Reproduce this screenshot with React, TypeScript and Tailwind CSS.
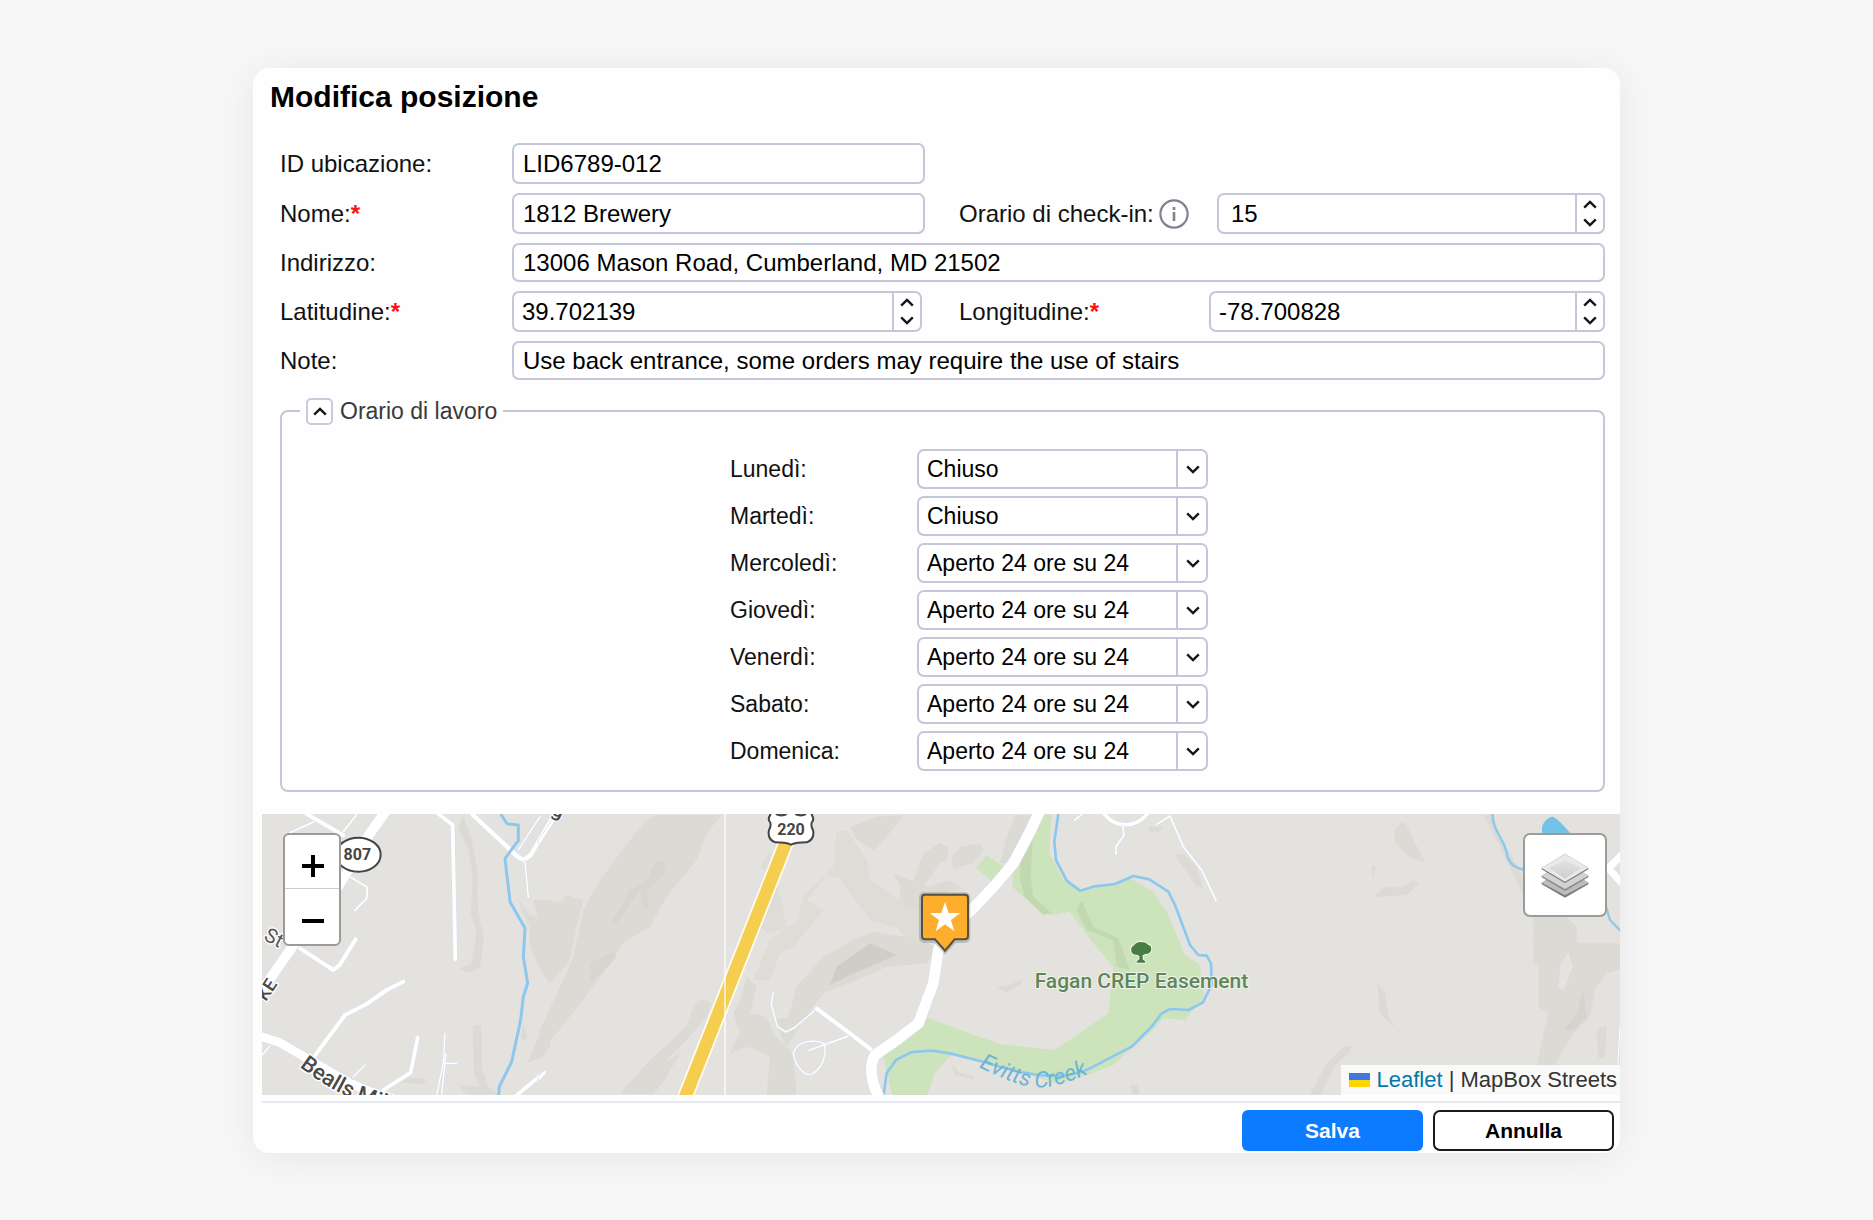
import { useState } from "react";
import type { ReactNode } from "react";

const DAYS = [
  { id: "lun", label: "Lunedì:", value: "closed" },
  { id: "mar", label: "Martedì:", value: "closed" },
  { id: "mer", label: "Mercoledì:", value: "open" },
  { id: "gio", label: "Giovedì:", value: "open" },
  { id: "ven", label: "Venerdì:", value: "open" },
  { id: "sab", label: "Sabato:", value: "open" },
  { id: "dom", label: "Domenica:", value: "open" },
];

const FIELD =
  "w-full min-w-0 rounded-[7px] border-2 border-[#c5c6da] bg-white px-[9px] text-2xl leading-7 text-black outline-none focus:border-[#0a78ff]";

function Chevron({ up = false }: { up?: boolean }) {
  return (
    <svg width="14" height="9" viewBox="0 0 14 9" fill="none" stroke="#15151c" strokeWidth="2.4" aria-hidden="true">
      <path d={up ? "M1.2 7.6 7 1.9l5.8 5.7" : "M1.2 1.4 7 7.1l5.8-5.7"} />
    </svg>
  );
}

function Label({ htmlFor, required, children }: { htmlFor: string; required?: boolean; children: ReactNode }) {
  return (
    <label htmlFor={htmlFor} className="block text-2xl leading-7 whitespace-nowrap text-[#111]">
      {children}
      {required && <span className="font-bold text-[#ff1010]">*</span>}
    </label>
  );
}

function NumberField({ id, initial, step, inset = "pl-2" }: { id: string; initial: string; step: number; inset?: string }) {
  const [value, setValue] = useState(initial);
  const digits = (initial.split(".")[1] ?? "").length;
  const bump = (d: number) => setValue((Number(value) + d * step).toFixed(digits));
  return (
    <div className="flex h-[41px] w-full overflow-hidden rounded-[7px] border-2 border-[#c5c6da] bg-white">
      <input
        id={id}
        type="text"
        inputMode="decimal"
        value={value}
        onChange={(e) => setValue(e.target.value)}
        className={`min-w-0 flex-1 text-2xl leading-7 text-black outline-none ${inset}`}
      />
      <div className="flex w-7 flex-col border-l-2 border-[#c5c6da]">
        <button type="button" aria-label="Aumenta" onClick={() => bump(1)} className="flex flex-1 items-center justify-center">
          <Chevron up />
        </button>
        <button type="button" aria-label="Diminuisci" onClick={() => bump(-1)} className="flex flex-1 items-center justify-center">
          <Chevron />
        </button>
      </div>
    </div>
  );
}

function InfoIcon() {
  return (
    <svg width="30" height="30" viewBox="0 0 30 30" fill="none" aria-hidden="true">
      <circle cx="15" cy="15" r="13.6" stroke="#7f838d" strokeWidth="2.2" />
      <path d="M15 13v9" stroke="#7f838d" strokeWidth="2.6" />
      <path d="M15 8v3" stroke="#7f838d" strokeWidth="2.6" />
    </svg>
  );
}

function LayersIcon() {
  return (
    <svg width="48" height="46" viewBox="0 0 144 138" aria-hidden="true">
      <defs>
        <linearGradient id="sheet" x1="0" y1="0" x2="0" y2="1">
          <stop offset="0" stopColor="#e2e2e2" />
          <stop offset="1" stopColor="#cfcfcf" />
        </linearGradient>
      </defs>
      <path d="M2 92 72 50l70 42v5l-70 40L2 97z" fill="#7d7d7d" />
      <path d="M2 92 72 50l70 42-70 38z" fill="#bcbcbc" />
      <path d="M2 71 72 29l70 42v5l-70 41L2 76z" fill="#8b8b8b" />
      <path d="M2 71 72 29l70 42-70 40z" fill="#d2d2d2" />
      <path d="M2 48 72 5l70 43v4L72 93 2 52z" fill="#757575" />
      <path d="M2 48 72 5l70 43-70 41z" fill="#e9e9e9" />
      <path d="M24 48 72 25l48 23-48 32z" fill="url(#sheet)" />
    </svg>
  );
}

function Road({ d, w }: { d: string; w: number }) {
  return (
    <>
      <path d={d} stroke="#dcdfec" strokeWidth={w + 4} fill="none" strokeLinecap="round" strokeLinejoin="round" />
      <path d={d} stroke="#fff" strokeWidth={w} fill="none" strokeLinecap="round" strokeLinejoin="round" />
    </>
  );
}

function Hills() {
  return (
    <>
      <g transform="translate(-36 -42)" fill="#dcdad5">
        <path d="M640 45 625 80 655 150 668 230 662 340 680 400 664 490 625 508 660 518 690 500 702 410 684 340 682 210 665 120z" />
        <path d="M805 300 840 345 862 350 850 300 900 298V550L875 520 840 440 838 380z" />
        <path d="M668 676H694V800L715 860 745 884H700L672 820z" />
        <path d="M625 855 690 860 700 884H650zM450 848 480 832 530 838 520 852z" />
        <path d="M900 620 870 700 832 790 880 770 900 740zM820 670l12 40-8 15-12-10z" />
      </g>
      <g transform="translate(834 -42)" fill="#dcdad5">
        <path d="M0 300 60 305 80 285 130 300 110 380 85 490 30 550 0 500z" />
        <path d="M545 45 500 100 470 180 380 290 330 380 250 430 160 560 50 700 0 760V690L60 560 100 470 130 330 180 240 270 120 320 60 350 45z" />
        <path d="M240 880 330 780 440 680 460 620 490 595 515 610 500 650 440 720 370 790 420 760 380 830 340 884z" />
        <path d="M690 150 640 240 660 200 690 230 650 380 690 400 770 370 790 290 880 200 890 95 920 90 980 180 990 240 1080 300 1145 310V420L1200 450 1150 480 1100 420 1075 385 990 360 900 235 860 225 800 300 850 330 760 440 720 460 690 540 640 540 690 420 740 380z" opacity=".85" />
        <path d="M770 560 850 470 940 420 1000 395 1120 415 1190 440 1160 490 1040 500 930 550 850 580 790 660 740 740 700 660 745 650z" />
        <path d="M620 530 650 560 630 640 680 650 700 700 760 760 770 884H680L690 770 620 740 570 760 600 700 580 640 600 600z" />
        <path d="M870 555 890 500 990 430 1070 465 1000 495 930 525z" fill="#d0cdc7" />
        <path d="M930 80 1010 50 1090 45 1040 110 1000 150 950 120z" />
        <path d="M1060 220 1120 245 1150 160 1200 130V190L1150 260 1090 270z" />
        <path d="M270 270 320 240 350 180 380 190 370 230 320 270 325 325 310 325 300 270 230 370 212 370zM150 490 220 455 230 470 200 505 150 545z" fill="#d7d5d0" />
      </g>
      <g transform="translate(1914 -42)" fill="#dcdad5">
        <path d="M40 250 60 180 120 128 145 140 140 180 90 200 70 255zM155 170 180 140 240 130 250 150 220 190 160 205z" />
        <path d="M345 45H400L375 120 345 190 300 190 320 110zM0 420 70 430 90 470 40 495 0 490zM0 235 80 260 150 240 190 265 90 290 60 330 0 310z" />
        <path d="M290 560 330 555 370 535 360 555 320 578zM825 165 850 162 890 200 908 265 890 260zM745 80 790 82 780 95 750 95zM690 855 715 855 720 884H700zM150 785 180 820 225 828 220 838 165 825z" />
      </g>
      <g transform="translate(3084 -42)" fill="#dcdad5">
        <path d="M335 66 350 75 370 120 408 188 365 175 315 130 312 95zM245 195 257 200 248 240zM256 285 285 262 330 262 370 242 388 248 350 285 260 292zM263 550 285 580 295 650 318 685 268 640z" />
        <path d="M580 45 620 120 650 180 700 290 730 360V490L745 500 745 620 775 640 760 700 740 800H790L850 700 900 650 915 570 950 520 990 510V430L940 430H860V380L830 350 800 340 720 350 700 230 660 160 620 90 610 45z" />
        <path d="M60 884 110 790 160 740 185 738 180 755 130 800 95 884zM920 690 950 675 945 770 925 775z" />
        <path d="M835 455 848 500 820 575 805 560 812 490z" fill="#e5e3e0" />
        <path d="M880 570 860 640 820 690 850 690 890 650z" fill="#d5d3ce" />
      </g>
    </>
  );
}

function MapDrawing() {
  const label = "'Roboto', 'Liberation Sans', sans-serif";
  return (
    <svg className="block h-full w-full" viewBox="0 0 4074 843" preserveAspectRatio="xMidYMid slice" role="img" aria-label="Mappa della posizione">
      <defs>
        <path id="creek-label" d="M236 802C310 836 380 872 450 860 500 850 550 830 640 788" />
        <path id="bealls-label" d="M148 800C215 850 270 886 340 908L500 962" />
      </defs>
      <rect width="4074" height="843" fill="#e4e2df" />
      <Hills />

      <g transform="translate(1914 -42)">
        <path
          d="M425 42H455L448 160 490 240 540 272 640 255 690 235 760 275 800 335 855 465 900 495 912 590 855 660 790 655 750 700 690 750 640 795 570 822 470 850 420 835 300 800 180 765 150 768 105 820 80 890H-22L-50 770 80 652 180 690 300 732 465 750 625 640 640 500 580 430 510 335 455 346 420 335 370 290 338 262V210L275 242 228 203 260 165 310 200 380 110z"
          fill="#cce3bb"
        />
        <path d="M400 80 365 130 360 240 375 290 430 345 455 340 400 290 392 230zM545 300 530 330 560 390 640 420 650 500 690 510 655 415 580 380z" fill="#c1d8b1" />
      </g>

      <g transform="translate(-36 -42)">
        <Road w={5} d="M120 98 190 66M320 44 276 100M300 230 352 262 350 295 314 332" />
        <Road w={12} d="M170 42 280 106" />
        <Road w={30} d="M410 30 360 100 240 300 120 450 30 580" />
        <Road w={12} d="M150 445 250 510 268 496 317 418" />
        <Road w={12} d="M196 765 285 645 350 612 410 570 460 545" />
        <Road w={26} d="M20 705 90 728 170 775 300 850 420 900" />
        <Road w={11} d="M560 38 608 75 616 478M400 870 482 818 503 713M795 890 883 817" />
        <Road w={13} d="M668 44 805 172 822 180 842 165 915 40" />
        <Road w={4} d="M805 150 870 50M825 185 835 292M585 700 580 790 560 884M588 760 575 884M588 790H620M345 795 310 830M60 738 36 765" />
      </g>
      <g transform="translate(834 -42)">
        <Road w={8} d="M-2 126 50 45M-2 835 14 817" />
        <Road w={4} d="M699 578 694 615 712 680 738 696 765 682 830 626" />
        <Road w={4} d="M805 752 925 708M858 735C830 715 770 720 760 760 765 800 800 835 820 820 850 800 860 760 853 735" />
        <Road w={12} d="M830 626 930 700 1005 758" />
        <path d="M744 112 432 900" stroke="#fffdf4" strokeWidth="48" />
        <path d="M744 112 432 900" stroke="#f5cd4f" strokeWidth="38" />
        <path d="M555 40V890" stroke="#fff" strokeWidth="4" />
      </g>
      <g transform="translate(1914 -42)">
        <path d="M475 42 463 125 468 180 500 242 540 272 580 260 645 252 700 228 748 238 805 275 825 315 870 435 895 465 920 467 933 490 935 555 908 608 865 630 810 627 785 640 755 680 695 740 570 805C480 850 360 820 240 783L150 760 95 752 35 756-12 780-40 820-50 890" fill="none" stroke="#8cc8ee" strokeWidth="8" strokeLinejoin="round" />
        <Road w={32} d="M425 20 390 95 340 190 290 250 215 330 135 400 115 450 100 550 55 670-10 720-75 765C-95 800-85 850-60 900" />
        <Road w={11} d="M605 30C640 90 710 85 745 38" />
        <Road w={5} d="M668 80 672 105 648 140 648 163M524 60 545 44M770 73 810 48 850 140 905 210 948 302" />
      </g>
      <g transform="translate(-36 -42)">
        <path d="M752 42 772 72 805 75V122L765 175 780 305 825 385 820 470 833 550 820 590 812 660 785 785 748 860 745 895" fill="none" stroke="#8cc8ee" strokeWidth="9" strokeLinejoin="round" />
      </g>
      <g transform="translate(3084 -42)" fill="none">
        <path d="M608 42C605 90 650 125 652 170 662 200 690 210 720 212M948 320 960 360 995 396" stroke="#8cc8ee" strokeWidth="7" />
        <path d="M756 110V80Q765 55 786 50 800 50 850 110z" fill="#72c2ea" />
        <Road w={22} d="M1010 150 955 205 1010 265" />
        <Road w={3} d="M990 680 984 790" />
      </g>

      <g fill="#fff" stroke="#444" strokeWidth="6" strokeLinejoin="round">
        <ellipse cx="289" cy="122" rx="67" ry="51" />
        <g transform="translate(834 -42)">
          <path d="M698 20 690 46Q682 58 691 68 694 78 687 90 681 118 706 127 736 127 753 134 770 127 800 127 825 118 819 90 812 78 815 68 824 58 816 46L808 20z" />
          <path d="M708 42Q724 50 740 42M766 42Q782 50 798 42" fill="none" strokeWidth="7" />
        </g>
      </g>

      <g fontFamily={label} fontWeight="500" stroke="#fff" strokeLinejoin="round" paintOrder="stroke">
        <g transform="translate(-36 -42)">
          <text x="322" y="181" textAnchor="middle" fontSize="48" fontWeight="700" fill="#444" strokeWidth="0">807</text>
          <text fontSize="66" fill="#4a4a4a" strokeWidth="8">
            <textPath href="#bealls-label">Bealls Mill</textPath>
          </text>
          <text transform="translate(38 418) rotate(28)" fontSize="60" fontWeight="400" fill="#555" strokeWidth="8">St</text>
          <text transform="translate(48 606) rotate(-57)" fontSize="54" fill="#4a4a4a" strokeWidth="8">KE</text>
        </g>
        <g transform="translate(834 -42)">
          <text transform="translate(32 42) rotate(25)" fontSize="60" fill="#4a4a4a" strokeWidth="6">g</text>
          <text x="753" y="106" textAnchor="middle" fontSize="48" fontWeight="700" fill="#444" strokeWidth="0">220</text>
        </g>
        <g transform="translate(1914 -42)">
          <text x="404" y="564" fontSize="63" fill="#5f8558" stroke="#eef3ea" strokeWidth="6">Fagan CREP Easement</text>
          <text fontSize="68" fontStyle="italic" fontWeight="400" fill="#6cb4d4" strokeWidth="0">
            <textPath href="#creek-label">Evitts Creek</textPath>
          </text>
          <path
            d="M722 426c-12 0-18 6-20 10-8 4-10 12-8 16 0 8 8 12 16 12l8 4v10l-8 6v4h26v-4l-8-6v-12l8-4c10 0 18-6 18-16 0-8-6-12-10-12-4-6-12-8-22-8z"
            fill="#487c45"
            strokeWidth="5"
          />
        </g>
      </g>

      <g transform="translate(1914 -42)">
        <path d="M74 284H194Q204 284 204 294V412Q204 422 194 422H164L135 453 105 422H74Q64 422 64 412V294Q64 284 74 284z" fill="#000" opacity=".16" stroke="#000" strokeWidth="14" />
        <path d="M74 284H194Q204 284 204 294V408Q204 418 194 418H164L135 452 105 418H74Q66 418 66 408V294Q66 284 74 284z" fill="#fdae2c" stroke="#55503f" strokeWidth="6" />
        <path d="M135 306 146 339H181L153 360 163 394 135 373 107 394 117 360 89 339H124z" fill="#fff" />
      </g>
    </svg>
  );
}

function MapPanel() {
  return (
    <div className="relative ml-[9px] h-[281px] overflow-hidden bg-[#e4e2df]">
      <MapDrawing />
      <div className="absolute top-[19px] left-[21px] flex h-[113px] w-[58px] flex-col rounded-[6px] border-2 border-[#9c9b99] bg-white">
        <button type="button" aria-label="Ingrandisci" className="flex h-[54px] items-center justify-center border-b border-[#ccc] pt-2 pl-0.5">
          <svg width="24" height="24" viewBox="0 0 24 24" stroke="#000" strokeWidth="4" aria-hidden="true">
            <path d="M1 12h22M12 1v22" />
          </svg>
        </button>
        <button type="button" aria-label="Riduci" className="flex flex-1 items-center justify-center pt-2 pl-0.5">
          <svg width="24" height="24" viewBox="0 0 24 24" stroke="#000" strokeWidth="4" aria-hidden="true">
            <path d="M1 12h22" />
          </svg>
        </button>
      </div>
      <button
        type="button"
        aria-label="Livelli"
        className="absolute top-[19px] right-[13px] flex size-[84px] items-center justify-center rounded-[7px] border-2 border-[#9c9b99] bg-white"
      >
        <LayersIcon />
      </button>
      <div className="absolute right-0 bottom-0 flex h-[30px] items-center bg-white/80 pr-[3px] pl-2 text-[22px] leading-[30px] text-[#333]">
        <svg width="21" height="14" viewBox="0 0 21 14" className="mr-1.5" aria-hidden="true">
          <path d="M0 0h21v7H0z" fill="#4078e0" />
          <path d="M0 7h21v7H0z" fill="#ffd500" />
        </svg>
        <a href="#leaflet" className="text-[#0078a8]">Leaflet</a>
        <span className="whitespace-pre"> | MapBox Streets</span>
      </div>
    </div>
  );
}

export default function App() {
  const [open, setOpen] = useState(true);
  return (
    <main className="min-h-screen bg-[#f7f7f7] px-6 py-[68px] font-['Liberation_Sans',Arial,sans-serif] text-[#111]">
      <form
        onSubmit={(e) => e.preventDefault()}
        className="mx-auto w-full max-w-[1367px] overflow-hidden rounded-2xl bg-[#fefefe] shadow-[0_4px_40px_rgba(0,0,0,0.07)]"
      >
        <h1 className="px-[17px] pt-[11px] text-[30px] leading-9 font-bold text-black">Modifica posizione</h1>

        <div className="grid grid-cols-[232px_minmax(0,413fr)_284px_minmax(0,396fr)] items-center gap-y-[9px] pt-7 pr-[15px] pl-[27px]">
          <Label htmlFor="lid">ID ubicazione:</Label>
          <input id="lid" defaultValue="LID6789-012" className={`h-[41px] ${FIELD}`} />
          <span className="col-span-2" />

          <Label htmlFor="nome" required>Nome:</Label>
          <input id="nome" defaultValue="1812 Brewery" className={`h-[41px] ${FIELD}`} />
          <div className="flex items-center gap-[5px] pl-[34px]">
            <Label htmlFor="checkin">Orario di check-in:</Label>
            <button type="button" aria-label="Informazioni">
              <InfoIcon />
            </button>
          </div>
          <div className="pl-2">
            <NumberField id="checkin" initial="15" step={1} inset="pl-3" />
          </div>

          <Label htmlFor="indirizzo">Indirizzo:</Label>
          <input id="indirizzo" defaultValue="13006 Mason Road, Cumberland, MD 21502" className={`col-span-3 h-[39px] ${FIELD}`} />

          <Label htmlFor="lat" required>Latitudine:</Label>
          <div className="pr-[3px]">
            <NumberField id="lat" initial="39.702139" step={0.000001} />
          </div>
          <div className="pl-[34px]">
            <Label htmlFor="lng" required>Longitudine:</Label>
          </div>
          <NumberField id="lng" initial="-78.700828" step={0.000001} />

          <Label htmlFor="note">Note:</Label>
          <input id="note" defaultValue="Use back entrance, some orders may require the use of stairs" className={`col-span-3 h-[39px] ${FIELD}`} />
        </div>

        <fieldset className="mt-[17px] mr-[15px] ml-[27px] rounded-lg border-2 border-[#c5c6da] pb-[19px]">
          <legend className="ml-[18px] flex items-center gap-[7px] px-1.5 text-[23px] leading-7 text-[#3a3a3a]">
            <button
              type="button"
              aria-label="Comprimi orario di lavoro"
              aria-expanded={open}
              onClick={() => setOpen(!open)}
              className="flex size-[27px] items-center justify-center rounded-[5px] border-2 border-[#c9cadf] bg-white"
            >
              <Chevron up={open} />
            </button>
            <span>Orario di lavoro</span>
          </legend>
          {open && (
            <div className="mx-auto flex w-[531px] flex-col gap-[7px] pt-6 pl-[53px]">
              {DAYS.map((d) => (
                <div key={d.id} className="flex items-center">
                  <label htmlFor={d.id} className="w-[187px] text-[23px] leading-7 text-[#111]">
                    {d.label}
                  </label>
                  <div className="relative flex-1">
                    <select
                      id={d.id}
                      defaultValue={d.value}
                      className="block h-10 w-full appearance-none rounded-[7px] border-2 border-[#c5c6da] bg-white pr-8 pl-2 text-[23px] leading-7 text-black outline-none"
                    >
                      <option value="closed">Chiuso</option>
                      <option value="open">Aperto 24 ore su 24</option>
                    </select>
                    <span className="pointer-events-none absolute inset-y-0 right-0 flex w-8 items-center justify-center border-l-2 border-[#c5c6da]">
                      <Chevron />
                    </span>
                  </div>
                </div>
              ))}
            </div>
          )}
        </fieldset>

        <div className="mt-[22px]">
          <MapPanel />
        </div>

        <div className="mt-1.5 ml-[9px] flex justify-end gap-[10px] border-t-2 border-[#e6e8f1] pt-[7px] pr-1.5 pb-0.5 text-[21px] leading-7 font-bold">
          <button type="submit" className="h-[41px] w-[181px] rounded-[6px] bg-[#0d7bff] text-white">
            Salva
          </button>
          <button type="button" className="h-[41px] w-[181px] rounded-[7px] border-2 border-[#1a1a1a] bg-white text-black">
            Annulla
          </button>
        </div>
      </form>
    </main>
  );
}
